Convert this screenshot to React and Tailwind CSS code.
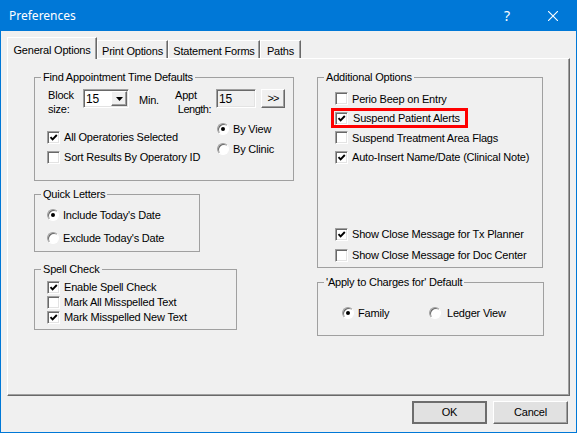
import React from 'react';

const sunken =
  'border border-t-[#a0a0a0] border-l-[#a0a0a0] border-r-white border-b-white shadow-[inset_1px_1px_0_#696969,inset_-1px_-1px_0_#e3e3e3]';
const raised =
  'border border-t-white border-l-white border-r-[#696969] border-b-[#696969] shadow-[inset_-1px_-1px_0_#a0a0a0]';

function CheckBox({ checked }) {
  return (
    <span className={`relative w-[13px] h-[13px] shrink-0 bg-white ${sunken}`}>
      {checked && (
        <svg className="absolute left-[1px] top-[1px]" width="9" height="9" viewBox="0 0 9 9">
          <path d="M1.5 4.2 L3.6 6.4 L7.8 2" fill="none" stroke="#000" strokeWidth="1.9" />
        </svg>
      )}
    </span>
  );
}

function Radio({ checked }) {
  return (
    <span className="w-[12px] h-[12px] shrink-0 rounded-full bg-white border border-t-[#a0a0a0] border-l-[#a0a0a0] border-r-white border-b-white shadow-[inset_1px_1px_0_#696969] flex items-center justify-center">
      {checked && <span className="w-[4px] h-[4px] rounded-full bg-black" />}
    </span>
  );
}

function Check({ label, checked, className = 'h-[19.5px]' }) {
  return (
    <div className={`flex items-center gap-[4px] ${className}`}>
      <CheckBox checked={checked} />
      <span>{label}</span>
    </div>
  );
}

function Option({ label, checked, className = 'h-[20px]' }) {
  return (
    <div className={`flex items-center gap-[4px] ${className}`}>
      <Radio checked={checked} />
      <span>{label}</span>
    </div>
  );
}

function Group({ title, className, children }) {
  return (
    <fieldset className={`border border-[#a0a0a0] ${className}`}>
      <legend className="ml-[6px] px-[2px] leading-[13px]">{title}</legend>
      {children}
    </fieldset>
  );
}

function Tab({ label, active, width }) {
  if (active) {
    return (
      <div
        className={`relative z-10 -mb-[1px] h-[22px] ${width} bg-[#f0f0f0] border-t border-l border-t-white border-l-white border-r border-r-[#696969] shadow-[inset_-1px_0_0_#a0a0a0] flex items-start justify-center pt-[4px]`}
      >
        {label}
      </div>
    );
  }
  return (
    <div
      className={`h-[18px] ${width} border-t border-l border-t-white border-l-white border-r border-r-[#696969] shadow-[inset_-1px_0_0_#a0a0a0] flex items-start justify-center pt-[2px]`}
    >
      {label}
    </div>
  );
}

function Button({ label, isDefault }) {
  return (
    <button
      className={`w-[75px] h-[23px] bg-[#e1e1e1] flex items-center justify-center ${
        isDefault
          ? 'border-2 border-[#6d6d6d]'
          : 'border border-t-white border-l-white border-r-[#696969] border-b-[#696969] shadow-[inset_-1px_-1px_0_#a0a0a0]'
      }`}
    >
      {label}
    </button>
  );
}

export default function App() {
  return (
    <div className="w-[577px] h-[433px] bg-[#0078d7] px-[1px] pb-[1px] flex flex-col font-['Liberation_Sans',Arial,sans-serif] text-[11px] tracking-[-0.2px] text-black">
      {/* Title bar */}
      <div className="h-[31px] shrink-0 flex items-center text-white">
        <span className="ml-[8px] text-[12px] tracking-normal font-['Segoe_UI','Noto_Sans',sans-serif]">
          Preferences
        </span>
        <div className="ml-auto flex h-full">
          <div className="w-[46px] h-full flex items-center justify-center text-[14px] tracking-normal font-['Noto_Sans',sans-serif]">
            ?
          </div>
          <div className="w-[46px] h-full flex items-center justify-center">
            <svg width="10" height="10" viewBox="0 0 10 10">
              <path d="M0 0 L10 10 M10 0 L0 10" stroke="#fff" strokeWidth="1.1" />
            </svg>
          </div>
        </div>
      </div>

      {/* Body */}
      <div className="flex-1 bg-[#f0f0f0] flex flex-col pl-[6px] pr-[6px] pt-[6px]">
        {/* Tabs */}
        <div className="h-[21px] flex items-end">
          <Tab label="General Options" active width="w-[90px]" />
          <Tab label="Print Options" width="w-[71px]" />
          <Tab label="Statement Forms" width="w-[92px]" />
          <Tab label="Paths" width="w-[41px]" />
        </div>

        {/* Panel */}
        <div className="h-[338px] w-[563px] border border-t-white border-l-white border-r-[#696969] border-b-[#696969] shadow-[inset_-1px_-1px_0_#a0a0a0] pl-[26px] pt-[12px] flex gap-[23px]">
          {/* Left column */}
          <div className="w-[260px] flex flex-col">
            <Group title="Find Appointment Time Defaults" className="w-[260px] h-[110px]">
              <div className="flex h-[19px] mt-[5px] items-start">
                <div className="ml-[13px] w-[35px] leading-[14px] -mt-[1px]">
                  <div>Block</div>
                  <div>size:</div>
                </div>
                <div className={`w-[46px] h-[19px] bg-white flex items-center ${sunken}`}>
                  <span className="flex-1 pl-[2px] text-[12px]">15</span>
                  <span className={`w-[16px] h-[15px] mr-[1px] bg-[#f0f0f0] flex items-center justify-center ${raised}`}>
                    <svg width="7" height="4" viewBox="0 0 7 4">
                      <path d="M0 0 H7 L3.5 4 Z" fill="#000" />
                    </svg>
                  </span>
                </div>
                <div className="w-[46px] pl-[10px] h-[19px] flex items-center pt-[3px]">Min.</div>
                <div className="w-[36px] leading-[14px] -mt-[1px] whitespace-nowrap">
                  <div>Appt</div>
                  <div className="text-right tracking-[-0.5px]">Length:</div>
                </div>
                <div className={`ml-[5px] w-[40px] h-[19px] bg-[#f0f0f0] flex items-center pl-[2px] text-[12px] ${sunken}`}>
                  15
                </div>
                <div className={`ml-[5px] w-[24px] h-[19px] bg-[#f0f0f0] flex items-center justify-center tracking-[-1px] ${raised}`}>
                  &gt;&gt;
                </div>
              </div>
              <div className="flex">
                <div className="ml-[12px] mt-[19px] w-[170px]">
                  <Check label="All Operatories Selected" checked className="h-[20px]" />
                  <Check label="Sort Results By Operatory ID" className="h-[20px]" />
                </div>
                <div className="mt-[11px]">
                  <Option label="By View" checked />
                  <Option label="By Clinic" />
                </div>
              </div>
            </Group>

            <Group title="Quick Letters" className="w-[166px] h-[64px] mt-[7px]">
              <div className="pl-[12px] pt-[2.5px]">
                <Option label="Include Today's Date" checked className="h-[23px]" />
                <Option label="Exclude Today's Date" className="h-[23px]" />
              </div>
            </Group>

            <Group title="Spell Check" className="w-[203px] h-[67px] mt-[11px]">
              <div className="pl-[12px] pt-[3.5px]">
                <Check label="Enable Spell Check" checked className="h-[15px]" />
                <Check label="Mark All Misspelled Text" className="h-[15px]" />
                <Check label="Mark Misspelled New Text" checked className="h-[15px]" />
              </div>
            </Group>
          </div>

          {/* Right column */}
          <div className="w-[227px] flex flex-col">
            <Group title="Additional Options" className="w-[226px] h-[197px]">
              <div className="pl-[17px] pt-[5px]">
                <Check label="Perio Beep on Entry" />
                <div className="h-[19.5px] flex items-center">
                  <div className="h-[20px] -ml-[4px] pl-[1px] pr-[5px] border-[3px] border-[#ff0000] flex items-center gap-[5px]">
                    <CheckBox checked />
                    <span>Suspend Patient Alerts</span>
                  </div>
                </div>
                <Check label="Suspend Treatment Area Flags" />
                <Check label="Auto-Insert Name/Date (Clinical Note)" checked />
                <Check label="Show Close Message for Tx Planner" checked className="h-[20px] mt-[57px]" />
                <Check label="Show Close Message for Doc Center" className="h-[20px] mt-[1px]" />
              </div>
            </Group>

            <Group title="'Apply to Charges for' Default" className="w-[227px] h-[60px] mt-[8px]">
              <div className="flex pl-[24px] mt-[14px]">
                <Option label="Family" checked className="h-[20px] w-[87px]" />
                <Option label="Ledger View" className="h-[20px] gap-[6px]" />
              </div>
            </Group>
          </div>
        </div>

        {/* Buttons */}
        <div className="mt-[5px] flex justify-end gap-[6px] pr-[2px]">
          <Button label="OK" isDefault />
          <Button label="Cancel" />
        </div>
      </div>
    </div>
  );
}
